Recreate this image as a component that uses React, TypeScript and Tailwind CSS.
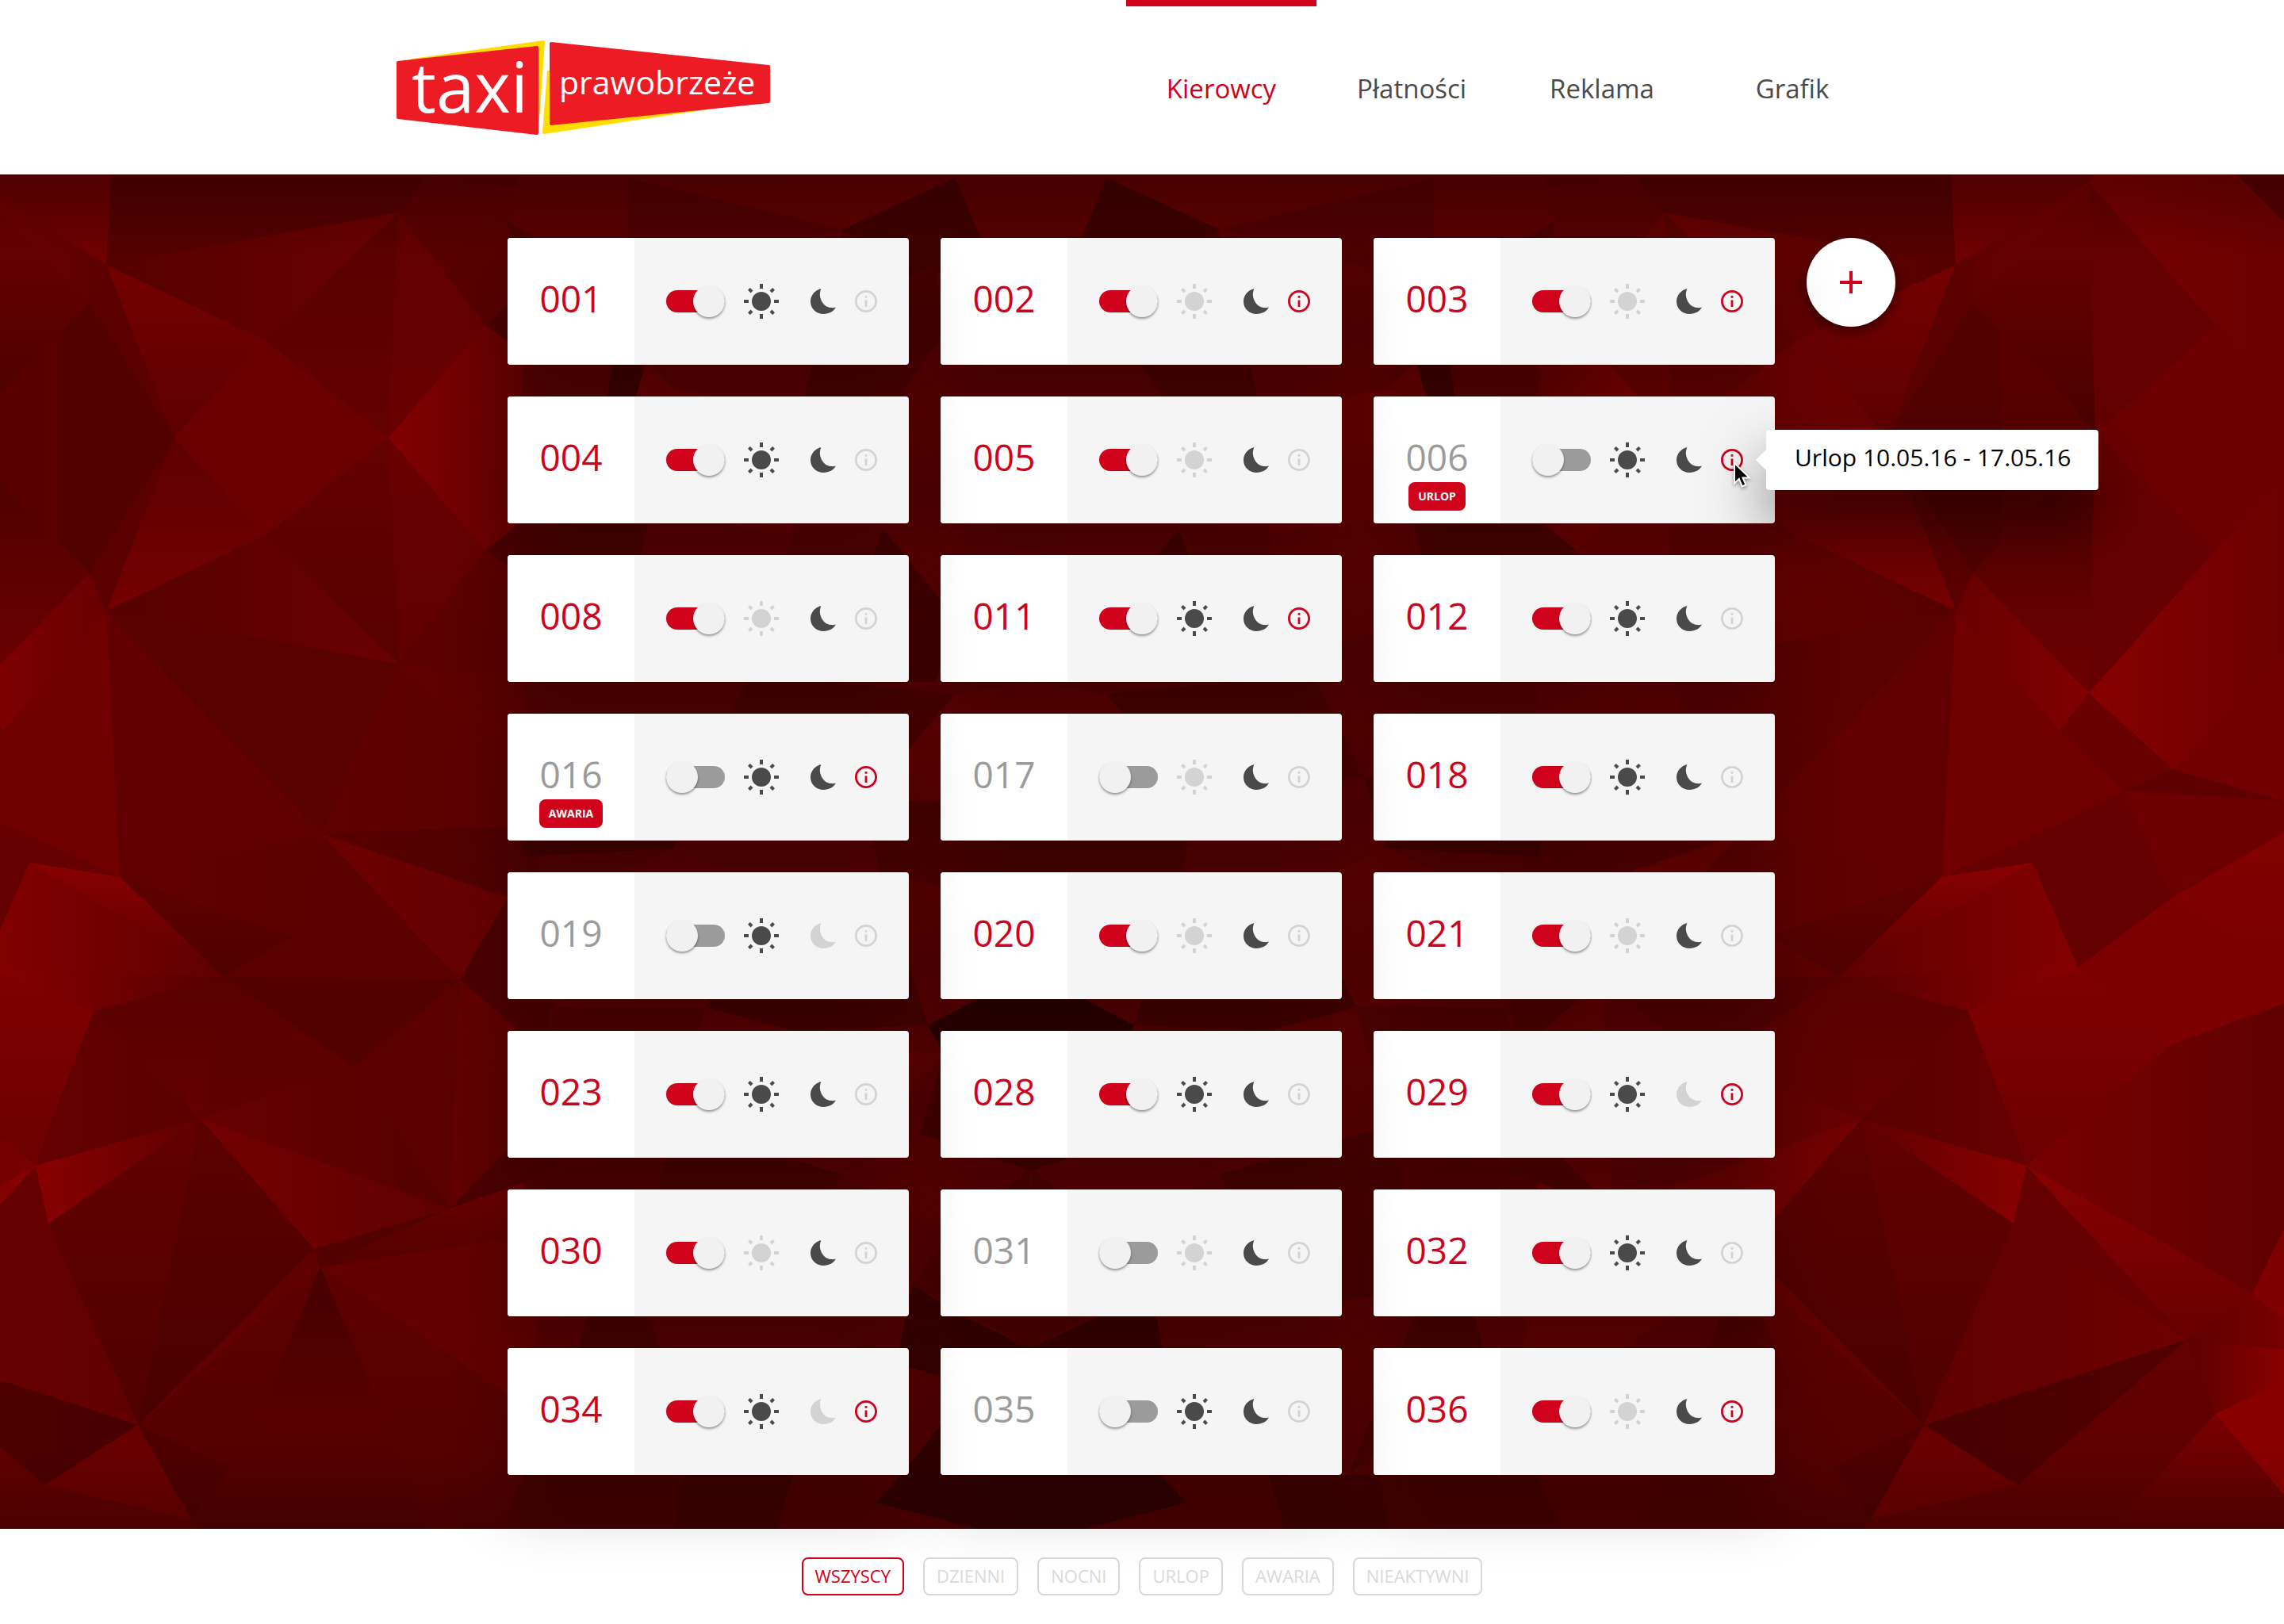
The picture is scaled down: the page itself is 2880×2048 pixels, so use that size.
import React from "react";

type Driver = {
  id: string;
  on: boolean;
  day: boolean;
  night: boolean;
  info: boolean;
  badge?: string;
  tooltip?: string;
};

const drivers: Driver[] = [
  { id: "001", on: true, day: true, night: true, info: false },
  { id: "002", on: true, day: false, night: true, info: true },
  { id: "003", on: true, day: false, night: true, info: true },
  { id: "004", on: true, day: true, night: true, info: false },
  { id: "005", on: true, day: false, night: true, info: false },
  { id: "006", on: false, day: true, night: true, info: true, badge: "URLOP", tooltip: "Urlop 10.05.16 - 17.05.16" },
  { id: "008", on: true, day: false, night: true, info: false },
  { id: "011", on: true, day: true, night: true, info: true },
  { id: "012", on: true, day: true, night: true, info: false },
  { id: "016", on: false, day: true, night: true, info: true, badge: "AWARIA" },
  { id: "017", on: false, day: false, night: true, info: false },
  { id: "018", on: true, day: true, night: true, info: false },
  { id: "019", on: false, day: true, night: false, info: false },
  { id: "020", on: true, day: false, night: true, info: false },
  { id: "021", on: true, day: false, night: true, info: false },
  { id: "023", on: true, day: true, night: true, info: false },
  { id: "028", on: true, day: true, night: true, info: false },
  { id: "029", on: true, day: true, night: false, info: true },
  { id: "030", on: true, day: false, night: true, info: false },
  { id: "031", on: false, day: false, night: true, info: false },
  { id: "032", on: true, day: true, night: true, info: false },
  { id: "034", on: true, day: true, night: false, info: true },
  { id: "035", on: false, day: true, night: true, info: false },
  { id: "036", on: true, day: false, night: true, info: true },
];

const navItems = ["Kierowcy", "Płatności", "Reklama", "Grafik"];
const filters = ["WSZYSCY", "DZIENNI", "NOCNI", "URLOP", "AWARIA", "NIEAKTYWNI"];

/* One facet of the low-poly backdrop: outline, start colour, end colour, gradient axis. */
type Facet = [string, string, string?, ("h" | "v")?];

const facets: Facet[] = [
  // outer strip
  ["-34,10 -194,190 -42,328", "#640000"],
  ["-34,10 -194,190 -280,280 -280,60 -220,0 -40,0", "#6a0000", "#780000", "h"],
  ["-194,190 -280,280 -280,385 -194,474 -42,328", "#6c0000"],
  ["-194,474 -34,654 -42,328", "#660000"],
  ["-34,654 -194,474 -280,385 -280,603 -140,750", "#6c0000", "#880000", "h"],
  ["-140,750 -280,603 -280,790", "#720000"],
  ["-140,750 -78,777 -280,790", "#5e0000"],
  ["-78,777 -280,790 -280,830 -139,912", "#6c0000"],
  ["-139,912 -280,830 -280,1000", "#820000", "#7c0000", "v"],
  ["-20,1000 -139,912 -280,1000 -280,1045 -139,1097", "#7c0000"],
  ["-139,1097 -280,1045 -280,1330 -240,1411 45,1250", "#600000", "#780000", "h"],
  ["-240,1411 -280,1330 -280,1445", "#7e0000"],
  ["-240,1411 -280,1445 -280,1482 -158,1469", "#780000", "#600000", "h"],
  ["-158,1469 -280,1482 -280,1525 -194,1563", "#8a0000", "#5c0000", "h"],
  ["-194,1563 -280,1522 -280,1665", "#880000"],
  ["-158,1469 -194,1563 -60,1708 20,1708 56,1653", "#640000", "#5c0000", "v"],
  ["-194,1563 -280,1665 -280,1708 -60,1708", "#780000", "#5c0000", "v"],
  // upper fan
  ["-34,10 134,114 140,0 -40,0", "#640000", "#700000", "v"],
  ["-34,10 134,114 112,161", "#740000", "#5c0000", "h"],
  ["-34,10 112,161 76,200 0,275 -42,328", "#6e0000", "#4a0000", "v"],
  ["76,200 76,464 0,385 -42,328 0,275", "#580000"],
  ["-34,654 112,503 76,464 0,385 -42,328", "#4a0000", "#6e0000", "v"],
  ["112,161 220,332 112,503 76,464 76,200", "#520000"],
  ["112,161 134,114 220,332", "#5a0000"],
  ["112,503 134,550 220,332", "#5a0000"],
  ["134,114 334,209 220,332", "#740000", "#5e0000", "v"],
  ["134,550 334,455 220,332", "#5e0000", "#740000", "v"],
  ["220,332 334,209 490,332 334,455", "#6a0000"],
  ["134,114 334,209 502,48", "#560000", "#6a0000", "h"],
  ["134,550 334,455 503,617", "#560000", "#6a0000", "h"],
  ["140,0 134,114 502,48 540,0", "#500000", "#560000", "v"],
  ["334,209 502,48 490,332", "#580000", "#640000", "v"],
  ["334,455 503,617 490,332", "#640000", "#580000", "v"],
  ["502,48 490,332 612,190", "#620000", "#6a0000", "v"],
  ["503,617 490,332 612,474", "#6a0000", "#600000", "v"],
  ["490,332 612,190 680,240 680,420 612,474", "#820000", "#5e0000", "h"],
  ["502,48 612,190 680,130 680,20 540,0", "#580000"],
  ["612,190 680,130 680,240", "#4a0000"],
  ["612,474 680,420 680,520", "#4a0000"],
  ["503,617 612,474 680,520 680,637", "#5a0000"],
  ["503,617 680,637 680,780 567,700", "#620000", "#580000", "h"],
  // middle band
  ["-34,654 112,503 134,550 4,701", "#820000", "#680000", "h"],
  ["134,550 4,701 -78,777 0,817 151,886", "#700000"],
  ["-34,654 4,701 -78,777 -140,750", "#680000"],
  ["-78,777 0,817 151,886 37,868 -20,1000 -139,912", "#680000", "#640000", "v"],
  ["134,550 404,831 151,886", "#600000"],
  ["134,550 503,617 404,831", "#590000"],
  ["503,617 680,780 680,821 404,831", "#600000", "#5a0000", "h"],
  ["404,831 680,821 680,930", "#580000", "#4e0000", "h"],
  ["404,831 640,912 580,1015", "#6c0000", "#640000", "h"],
  ["151,886 404,831 370,960", "#620000", "#5c0000", "h"],
  ["151,886 370,960 282,1012", "#5e0000", "#500000", "v"],
  ["404,831 370,960 282,1012 580,1015", "#5b0000"],
  ["37,868 151,886 282,1012", "#8a0000", "#5a0000", "v"],
  ["37,868 282,1012 -20,1000", "#840000", "#600000", "h"],
  ["-20,1000 282,1012 118,1055", "#8a0000", "#560000", "h"],
  ["-20,1000 118,1055 57,1215 45,1250 -139,1097", "#800000", "#6c0000", "v"],
  ["118,1055 282,1012 253,1191", "#580000", "#640000", "v"],
  ["118,1055 253,1191 45,1250 57,1215", "#660000", "#5a0000", "h"],
  ["45,1250 253,1191 61,1323", "#880000", "#600000", "h"],
  ["282,1012 580,1015 446,1125", "#520000"],
  ["282,1012 446,1125 253,1191", "#590000", "#600000", "v"],
  ["253,1191 446,1125 567,1304", "#680000", "#540000", "h"],
  ["446,1125 580,1015 567,1304", "#5a0000"],
  ["253,1191 567,1304 396,1355", "#740000", "#600000", "h"],
  ["580,1015 640,912 700,960 690,1110", "#4c0000"],
  ["580,1015 690,1110 700,1170 567,1304", "#620000", "#580000", "h"],
  ["567,1304 700,1170 700,1265", "#4c0000"],
  // lower band
  ["396,1355 567,1304 404,1378", "#520000"],
  ["567,1304 680,1265 680,1335 404,1378", "#6c0000", "#540000", "v"],
  ["404,1378 680,1335 680,1565", "#620000"],
  ["404,1378 680,1565 680,1708 540,1708", "#5c0000", "#540000", "v"],
  ["404,1378 174,1577 290,1630 241,1696 250,1708 540,1708", "#5c0000", "#520000", "v"],
  ["404,1378 490,1580 320,1580", "#460000", "#590000", "v"],
  ["396,1355 404,1378 174,1577", "#600000"],
  ["253,1191 396,1355 174,1577", "#5c0000", "#4a0000", "v"],
  ["61,1323 253,1191 174,1577", "#620000", "#500000", "v"],
  ["-158,1469 61,1323 174,1577", "#6e0000", "#600000", "h"],
  ["45,1250 61,1323 -158,1469", "#660000"],
  ["45,1250 -158,1469 -240,1411", "#880000", "#680000", "v"],
  ["-158,1469 174,1577 56,1653", "#520000", "#480000", "h"],
  ["56,1653 174,1577 241,1696", "#680000"],
  ["56,1653 241,1696 250,1708 20,1708", "#5c0000"],
  ["174,1577 241,1696 290,1630", "#4e0000"],
  // centre
  ["655,0 793,5 790,140 640,60", "#5a0000"],
  ["793,5 1063,69 790,140", "#500000"],
  ["793,5 1205,4 1063,69", "#5c0000"],
  ["1205,4 1063,69 1150,130 1260,110", "#400000"],
  ["1205,4 1300,0 1300,170 1240,90", "#580000"],
  ["640,60 790,140 771,240 660,240", "#4c0000"],
  ["790,140 1063,69 1010,300 850,270", "#580000"],
  ["1063,69 1150,130 1180,110 1190,200 1120,300 1010,300", "#480000"],
  ["1190,200 1300,170 1300,420 1120,300", "#560000"],
  ["771,240 814,235 800,290 765,290", "#3c0000"],
  ["660,240 771,240 765,290 700,420 650,380", "#540000"],
  ["814,235 850,270 1010,300 1000,450 820,430 800,290", "#620000"],
  ["1010,300 1120,300 1300,420 1300,470 1114,447 1000,450", "#560000"],
  ["650,380 700,420 820,430 790,560 670,540", "#4a0000"],
  ["820,430 1000,450 960,600 790,560", "#5a0000"],
  ["1114,447 1040,640 1180,640 1205,560", "#420000"],
  ["1000,450 1114,447 1040,640 960,600", "#540000"],
  ["1114,447 1300,470 1300,600 1205,560", "#580000"],
  ["660,640 790,560 960,600 880,760 660,700", "#540000"],
  ["960,600 1040,640 1205,655 1090,790 880,760", "#480000"],
  ["1205,655 1300,640 1300,790 1090,790", "#5c0000"],
  ["650,780 880,760 850,850 660,860", "#440000"],
  ["880,760 1090,790 1110,880 960,900 850,850", "#560000"],
  ["1090,790 1300,790 1300,920 1110,880", "#4a0000"],
  ["690,930 850,850 960,900 890,1050 700,1050", "#5a0000"],
  ["960,900 1110,880 1170,1073 1000,1080 890,1050", "#440000"],
  ["1110,880 1300,920 1300,1040 1232,1040 1170,1073", "#560000"],
  ["1232,1040 1300,1040 1300,1150 1190,1110 1170,1073", "#2c0000"],
  ["700,1050 890,1050 850,1200 700,1180", "#500000"],
  ["890,1050 1000,1080 1190,1110 1060,1260 850,1200", "#5a0000"],
  ["1190,1110 1300,1150 1300,1256 1160,1210", "#440000"],
  ["1160,1210 1298,1256 1200,1330 1060,1260", "#580000"],
  ["1298,1256 1300,1480 1150,1400 1200,1330", "#4c0000"],
  ["660,1270 850,1200 900,1240 800,1400 670,1400", "#500000"],
  ["850,1200 1060,1260 1000,1440 800,1400", "#480000"],
  ["1060,1260 1200,1330 1150,1400 1000,1440", "#540000"],
  ["1150,1400 1215,1440 1300,1480 1240,1530 1130,1500", "#380000"],
  ["670,1400 740,1440 725,1500 690,1580", "#5a0000"],
  ["740,1440 800,1400 940,1480 900,1640 725,1500", "#480000"],
  ["800,1400 1000,1440 1130,1500 1136,1640 900,1640", "#560000"],
  ["690,1580 725,1500 860,1640 850,1708 630,1708", "#4c0000"],
  ["860,1640 1000,1640 980,1708 850,1708", "#440000"],
  ["1000,1640 1136,1640 1104,1675 1232,1708 980,1708", "#540000"],
  ["1136,1640 1200,1560 1300,1540 1300,1708 1232,1708 1104,1675", "#360000"],
];

function Backdrop() {
  return (
    <svg
      className="absolute inset-0 h-full w-full"
      viewBox="0 0 2880 1708"
      preserveAspectRatio="xMidYMid slice"
      aria-hidden="true"
    >
      <defs>
        {facets.map(([, from, to, axis], i) =>
          to ? (
            <linearGradient key={i} id={`facet-${i}`} x1="0" y1="0" x2={axis === "h" ? 1 : 0} y2={axis === "v" ? 1 : 0}>
              <stop offset="0" stopColor={from} />
              <stop offset="1" stopColor={to} />
            </linearGradient>
          ) : null
        )}
        <linearGradient id="edge-top" x1="0" y1="0" x2="0" y2="1">
          <stop offset="0" stopColor="#000" stopOpacity="0.22" />
          <stop offset="1" stopColor="#000" stopOpacity="0" />
        </linearGradient>
        <linearGradient id="edge-bottom" x1="0" y1="0" x2="0" y2="1">
          <stop offset="0" stopColor="#000" stopOpacity="0" />
          <stop offset="1" stopColor="#000" stopOpacity="0.18" />
        </linearGradient>
        <g id="mesh" shapeRendering="crispEdges">
          {facets.map(([points, from, to], i) => (
            <polygon key={i} points={points} fill={to ? `url(#facet-${i})` : from} />
          ))}
        </g>
      </defs>
      <rect width="2880" height="1708" fill="#540000" />
      <use href="#mesh" />
      <use href="#mesh" transform="translate(2600 0) scale(-1 1)" />
      <rect width="2880" height="100" fill="url(#edge-top)" />
      <rect y="1608" width="2880" height="100" fill="url(#edge-bottom)" />
    </svg>
  );
}

function Logo() {
  return (
    <svg className="h-[119px] w-[471px]" viewBox="0 0 471 119" role="img" aria-label="taxi prawobrzeże">
      <g strokeLinejoin="round" strokeWidth="4">
        <path d="M20 25 L185 2 L178 100 L170 40 Z" fill="#ffdd00" stroke="#ffdd00" />
        <path d="M192 40 L186 116 L392 85 L300 80 Z" fill="#ffdd00" stroke="#ffdd00" />
        <path d="M2 28 L177 9 L177 117 L2 97 Z" fill="#ed1c24" stroke="#ed1c24" />
        <path d="M195 4 L469 33 L469 77 L195 105 Z" fill="#ed1c24" stroke="#ed1c24" />
      </g>
      <g fill="#fff" fontFamily="'Open Sans', 'Noto Sans', sans-serif" fontWeight="500">
        <text x="19" y="91" fontSize="87">
          taxi
        </text>
        <text x="205" y="68" fontSize="41">
          prawobrzeże
        </text>
      </g>
    </svg>
  );
}

function SunIcon() {
  return (
    <svg className="size-11" viewBox="-22 -22 44 44" fill="currentColor" aria-hidden="true">
      <circle r="12" />
      {[0, 90, 180, 270].map((a) => (
        <rect key={a} x="-2" y="-22" width="4" height="6" transform={`rotate(${a})`} />
      ))}
      {[45, 135, 225, 315].map((a) => (
        <rect key={a} x="-2" y="-22" width="4" height="5" transform={`rotate(${a})`} />
      ))}
    </svg>
  );
}

function MoonIcon() {
  return (
    <svg className="size-8" viewBox="-16 -16 32 32" fill="currentColor" aria-hidden="true">
      <path d="M-2.6 -16 C-4.6 -11.5 -4.8 -6.5 -2.8 -2 C-0.6 3.6 4 7.6 10 8.1 C12.3 8.3 14.3 8.1 16 7.6 C13.2 12.8 7.4 16 0.5 16 C-8.6 16 -16 9.2 -16 0.2 C-16 -7.6 -10.6 -14 -2.6 -16 Z" />
    </svg>
  );
}

function InfoIcon() {
  return (
    <svg className="size-7" viewBox="2 2 20 20" fill="currentColor" aria-hidden="true">
      <path d="M11 17h2v-6h-2v6zm1-15C6.48 2 2 6.48 2 12s4.48 10 10 10 10-4.48 10-10S17.52 2 12 2zm0 18c-4.41 0-8-3.59-8-8s3.59-8 8-8 8 3.59 8 8-3.59 8-8 8zM11 9h2V7h-2v2z" />
    </svg>
  );
}

function Pointer() {
  return (
    <svg
      className="absolute left-4 top-4 h-[34px] w-6 drop-shadow-[0_2px_2px_rgba(0,0,0,0.4)]"
      viewBox="0 0 24 34"
      aria-hidden="true"
    >
      <path
        d="M1 2 L1 27.5 L6.8 22 L10.8 31.4 L15.4 29.4 L11.5 20.4 L19.8 20.4 Z"
        fill="#000"
        stroke="#fff"
        strokeWidth="2"
      />
    </svg>
  );
}

function Tooltip({ id, text }: { id: string; text: string }) {
  return (
    <div
      id={id}
      role="tooltip"
      className="absolute left-full top-1/2 ml-[29px] flex h-[76px] w-[419px] -translate-y-1/2 items-center whitespace-nowrap rounded bg-white pb-2 pl-9 text-[30px] text-black shadow-[0_40px_80px_rgba(0,0,0,0.5)]"
    >
      <span className="absolute -left-[13px] top-6 h-7 w-[14px] bg-white [clip-path:polygon(100%_0,0_50%,100%_100%)]" />
      {text}
    </div>
  );
}

const layers = ["z-30", "z-20", "z-10"];

function DriverCard({ driver, column }: { driver: Driver; column: number }) {
  const { id, on, day, night, info, badge, tooltip } = driver;
  return (
    <article
      className={`relative flex h-40 rounded bg-[#f5f5f5] shadow-[0_40px_80px_rgba(0,0,0,0.24)] ${layers[column]}`}
    >
      <div className="flex w-40 shrink-0 flex-col items-center rounded-l bg-white pt-[46px]">
        <h2 className={`text-[46px] leading-[60px] ${on ? "text-[#d0021b]" : "text-[#9b9b9b]"}`}>{id}</h2>
        {badge && (
          <span className="mt-0.5 flex h-9 items-center rounded-lg bg-[#d0021b] px-3 text-sm font-bold text-white">
            {badge}
          </span>
        )}
      </div>
      <div className="flex flex-1 items-center pl-10">
        <input
          type="checkbox"
          role="switch"
          aria-label={`Kierowca ${id} aktywny`}
          defaultChecked={on}
          className="relative mr-6 h-7 w-[74px] shrink-0 appearance-none rounded-full bg-[#9b9b9b] before:absolute before:-top-1.5 before:left-0 before:size-10 before:rounded-full before:bg-[#f1f1f1] before:shadow-[0_2px_3px_rgba(0,0,0,0.4)] checked:bg-[#d0021b] checked:before:left-[34px]"
        />
        <button
          type="button"
          aria-label="Zmiana dzienna"
          aria-pressed={day}
          className={`mr-10 ${day ? "text-[#4a4a4a]" : "text-[#d3d3d3]"}`}
        >
          <SunIcon />
        </button>
        <button
          type="button"
          aria-label="Zmiana nocna"
          aria-pressed={night}
          className={`mr-6 ${night ? "text-[#4a4a4a]" : "text-[#d3d3d3]"}`}
        >
          <MoonIcon />
        </button>
        <div className="relative">
          <button
            type="button"
            aria-label="Informacje"
            aria-describedby={tooltip ? `note-${id}` : undefined}
            className={`block ${info ? "text-[#d0021b]" : "text-[#d3d3d3]"}`}
          >
            <InfoIcon />
          </button>
          {tooltip && <Tooltip id={`note-${id}`} text={tooltip} />}
          {tooltip && <Pointer />}
        </div>
      </div>
    </article>
  );
}

export default function App() {
  return (
    <div className="flex min-h-screen flex-col bg-white font-['Open_Sans','Noto_Sans',sans-serif]">
      <header className="bg-white">
        <div className="mx-auto flex h-[220px] max-w-[1880px] items-center justify-between">
          <a href="#" aria-label="Strona główna">
            <Logo />
          </a>
          <nav className="flex h-full">
            {navItems.map((item, i) => (
              <a
                key={item}
                href="#"
                aria-current={i === 0 ? "page" : undefined}
                className={`flex w-60 items-center justify-center border-t-8 pb-1 text-[33px] ${
                  i === 0 ? "border-t-[#d0021b] text-[#d0021b]" : "border-t-transparent text-[#4a4a4a]"
                }`}
              >
                {item}
              </a>
            ))}
          </nav>
        </div>
      </header>

      <main className="relative z-10 grow">
        <Backdrop />
        <div className="relative grid grid-cols-[1fr_minmax(0,1600px)_1fr] pb-[68px] pt-20">
          <section aria-label="Kierowcy" className="col-start-2 grid grid-cols-3 gap-10 pr-0.5">
            {drivers.map((driver, i) => (
              <DriverCard key={driver.id} driver={driver} column={i % 3} />
            ))}
          </section>
          <div className="pl-[38px]">
            <button
              type="button"
              aria-label="Dodaj kierowcę"
              className="flex size-28 items-center justify-center rounded-full bg-white text-[#d0021b] shadow-[0_6px_16px_rgba(0,0,0,0.5)]"
            >
              <svg className="size-7" viewBox="0 0 28 28" fill="currentColor" aria-hidden="true">
                <path d="M12 0h4v12h12v4H16v12h-4V16H0v-4h12z" />
              </svg>
            </button>
          </div>
        </div>
      </main>

      <footer className="flex justify-center gap-6 bg-white py-9">
        {filters.map((filter, i) => (
          <button
            key={filter}
            type="button"
            aria-pressed={i === 0}
            className={`h-12 rounded-lg border-2 px-[15px] pb-0.5 text-[22px] leading-8 ${
              i === 0 ? "border-[#d0021b] text-[#d0021b]" : "border-[#dadada] text-[#dadada]"
            }`}
          >
            {filter}
          </button>
        ))}
      </footer>
    </div>
  );
}
